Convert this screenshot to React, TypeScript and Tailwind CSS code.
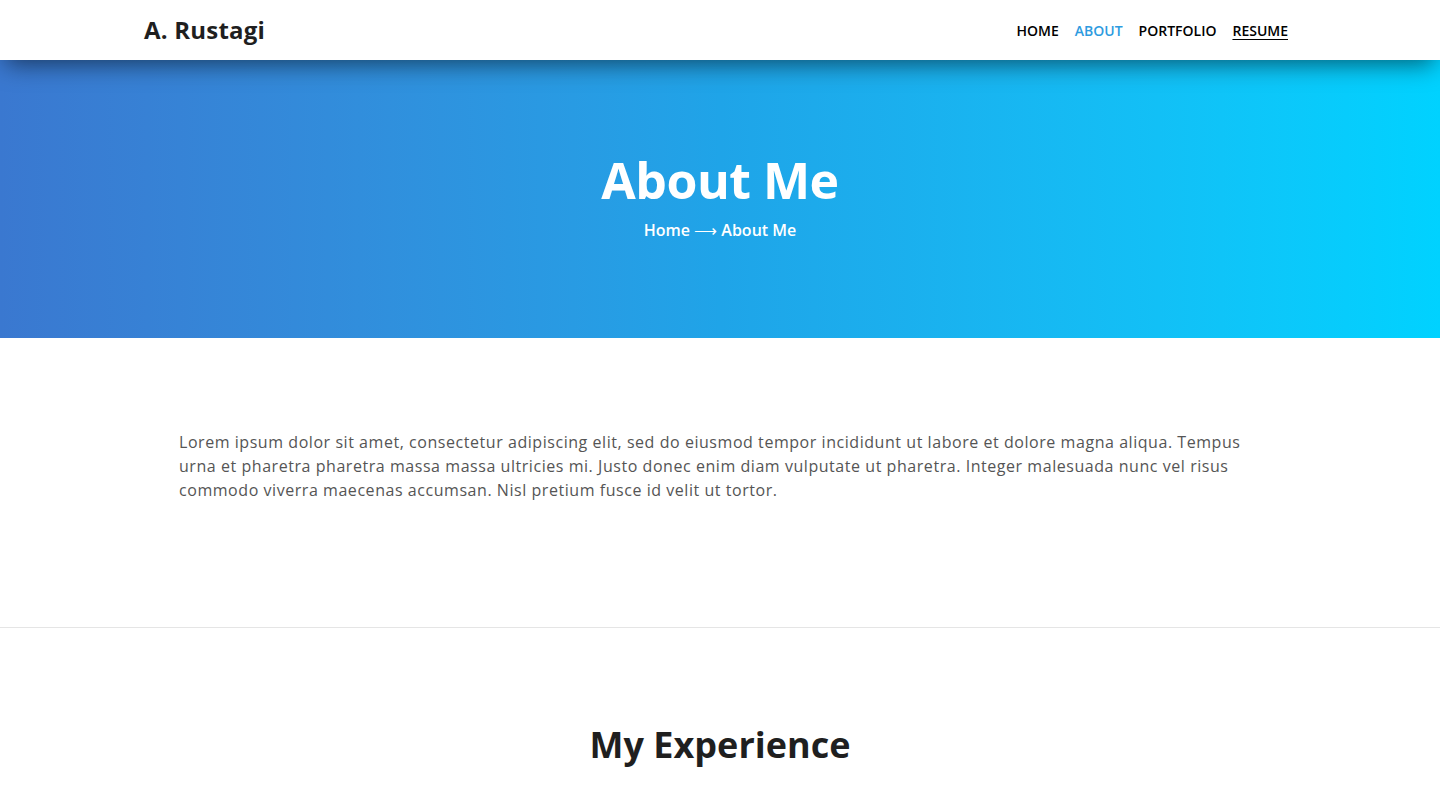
const font = { fontFamily: '"Open Sans", "Noto Sans", sans-serif' };

function Navbar() {
  return (
    <nav className="relative z-10 h-[60px] bg-white shadow-[0_10px_25px_-6px_rgba(0,0,0,0.55)]">
      <div className="mx-auto flex h-full w-[1152px] items-center justify-between pr-2">
        <a className="text-[24px] font-bold tracking-[0.2px] text-[#1f1f1f]">A. Rustagi</a>
        <ul className="flex items-center gap-4 text-[14px] font-semibold text-black">
          <li>HOME</li>
          <li className="text-[#2d9be0]">ABOUT</li>
          <li>PORTFOLIO</li>
          <li className="underline underline-offset-[3px]">RESUME</li>
        </ul>
      </div>
    </nav>
  );
}

function Hero() {
  return (
    <header className="flex h-[278px] flex-col items-center bg-gradient-to-r from-[#3a78d0] via-[#1fa4e8] to-[#00d2ff] pt-[88px] text-white">
      <h1 className="text-[50px] font-bold leading-[64px] tracking-[-0.5px]">About Me</h1>
      <p className="mt-[6px] text-[16px] font-semibold">
        Home <span className="font-normal">⟶</span> About Me
      </p>
    </header>
  );
}

export default function App() {
  return (
    <div style={font} className="min-h-screen bg-white">
      <Navbar />
      <Hero />
      <section className="border-b border-[#e5e5e5] pt-[92px] pb-[125px]">
        <p className="mx-auto w-[1082px] text-[16px] leading-[24px] tracking-[0.55px] text-[#555]">
          Lorem ipsum dolor sit amet, consectetur adipiscing elit, sed do eiusmod tempor incididunt ut labore et dolore
          magna aliqua. Tempus urna et pharetra pharetra massa massa ultricies mi. Justo donec enim diam vulputate ut
          pharetra. Integer malesuada nunc vel risus commodo viverra maecenas accumsan. Nisl pretium fusce id velit ut
          tortor.
        </p>
      </section>
      <section className="pt-[92px]">
        <h2 className="text-center text-[36px] font-bold leading-[50px] text-[#1f1f1f]">My Experience</h2>
      </section>
    </div>
  );
}
